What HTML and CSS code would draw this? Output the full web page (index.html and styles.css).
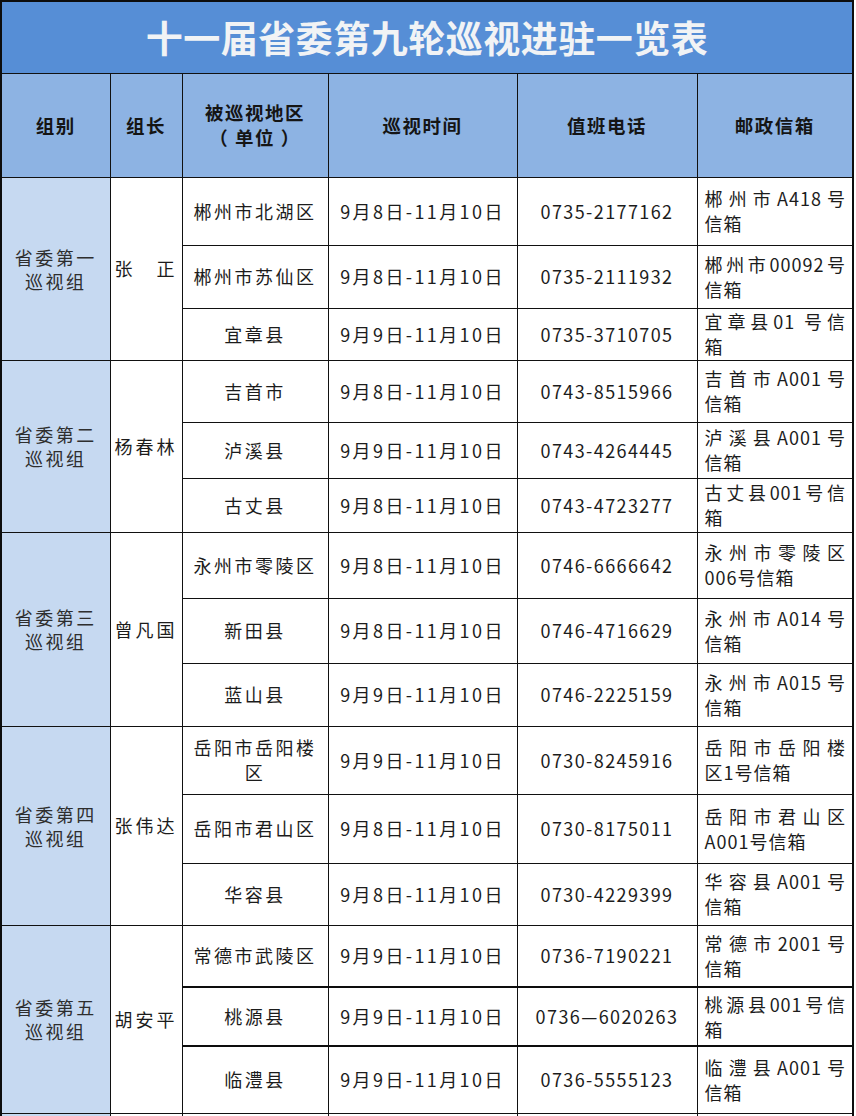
FILE: index.html
```html
<!DOCTYPE html>
<html lang="zh-CN">
<head>
<meta charset="utf-8">
<title>十一届省委第九轮巡视进驻一览表</title>
<link rel="stylesheet" href="styles.css">
</head>
<body>
<table class="sheet">
  <colgroup>
    <col class="c-group"><col class="c-leader"><col class="c-area"><col class="c-date"><col class="c-phone"><col class="c-mail">
  </colgroup>
  <thead>
    <tr class="title-row"><th colspan="6" class="title">十一届省委第九轮巡视进驻一览表</th></tr>
    <tr class="head-row">
      <th>组别</th>
      <th>组长</th>
      <th><span class="hl">被巡视地区</span><span class="hl">（ 单位 ）</span></th>
      <th>巡视时间</th>
      <th>值班电话</th>
      <th>邮政信箱</th>
    </tr>
  </thead>
  <tbody>
    <tr>
      <td rowspan="3" class="group"><span class="gl">省委第一</span><span class="gl">巡视组</span></td>
      <td rowspan="3" class="leader">张　正</td>
      <td class="area">郴州市北湖区</td><td class="date">9月8日-11月10日</td><td class="phone">0735-2177162</td>
      <td class="mail"><span class="m1">郴州市A418号</span><span class="m2">信箱</span></td>
    </tr>
    <tr>
      <td class="area">郴州市苏仙区</td><td class="date">9月8日-11月10日</td><td class="phone">0735-2111932</td>
      <td class="mail"><span class="m1">郴州市00092号</span><span class="m2">信箱</span></td>
    </tr>
    <tr>
      <td class="area">宜章县</td><td class="date">9月9日-11月10日</td><td class="phone">0735-3710705</td>
      <td class="mail"><span class="m1">宜章县01 号信</span><span class="m2">箱</span></td>
    </tr>
    <tr>
      <td rowspan="3" class="group"><span class="gl">省委第二</span><span class="gl">巡视组</span></td>
      <td rowspan="3" class="leader">杨春林</td>
      <td class="area">吉首市</td><td class="date">9月8日-11月10日</td><td class="phone">0743-8515966</td>
      <td class="mail"><span class="m1">吉首市A001号</span><span class="m2">信箱</span></td>
    </tr>
    <tr>
      <td class="area">泸溪县</td><td class="date">9月9日-11月10日</td><td class="phone">0743-4264445</td>
      <td class="mail"><span class="m1">泸溪县A001号</span><span class="m2">信箱</span></td>
    </tr>
    <tr>
      <td class="area">古丈县</td><td class="date">9月8日-11月10日</td><td class="phone">0743-4723277</td>
      <td class="mail"><span class="m1">古丈县001号信</span><span class="m2">箱</span></td>
    </tr>
    <tr>
      <td rowspan="3" class="group"><span class="gl">省委第三</span><span class="gl">巡视组</span></td>
      <td rowspan="3" class="leader">曾凡国</td>
      <td class="area">永州市零陵区</td><td class="date">9月8日-11月10日</td><td class="phone">0746-6666642</td>
      <td class="mail"><span class="m1">永州市零陵区</span><span class="m2">006号信箱</span></td>
    </tr>
    <tr>
      <td class="area">新田县</td><td class="date">9月8日-11月10日</td><td class="phone">0746-4716629</td>
      <td class="mail"><span class="m1">永州市A014号</span><span class="m2">信箱</span></td>
    </tr>
    <tr>
      <td class="area">蓝山县</td><td class="date">9月9日-11月10日</td><td class="phone">0746-2225159</td>
      <td class="mail"><span class="m1">永州市A015号</span><span class="m2">信箱</span></td>
    </tr>
    <tr>
      <td rowspan="3" class="group"><span class="gl">省委第四</span><span class="gl">巡视组</span></td>
      <td rowspan="3" class="leader">张伟达</td>
      <td class="area"><span class="al">岳阳市岳阳楼</span><span class="al">区</span></td><td class="date">9月9日-11月10日</td><td class="phone">0730-8245916</td>
      <td class="mail"><span class="m1">岳阳市岳阳楼</span><span class="m2">区1号信箱</span></td>
    </tr>
    <tr>
      <td class="area">岳阳市君山区</td><td class="date">9月8日-11月10日</td><td class="phone">0730-8175011</td>
      <td class="mail"><span class="m1">岳阳市君山区</span><span class="m2">A001号信箱</span></td>
    </tr>
    <tr>
      <td class="area">华容县</td><td class="date">9月8日-11月10日</td><td class="phone">0730-4229399</td>
      <td class="mail"><span class="m1">华容县A001号</span><span class="m2">信箱</span></td>
    </tr>
    <tr>
      <td rowspan="3" class="group"><span class="gl">省委第五</span><span class="gl">巡视组</span></td>
      <td rowspan="3" class="leader">胡安平</td>
      <td class="area">常德市武陵区</td><td class="date">9月9日-11月10日</td><td class="phone">0736-7190221</td>
      <td class="mail"><span class="m1">常德市2001号</span><span class="m2">信箱</span></td>
    </tr>
    <tr class="thick">
      <td class="area">桃源县</td><td class="date">9月9日-11月10日</td><td class="phone">0736—6020263</td>
      <td class="mail"><span class="m1">桃源县001号信</span><span class="m2">箱</span></td>
    </tr>
    <tr class="thick">
      <td class="area">临澧县</td><td class="date">9月9日-11月10日</td><td class="phone">0736-5555123</td>
      <td class="mail"><span class="m1">临澧县A001号</span><span class="m2">信箱</span></td>
    </tr>
    <tr class="tail">
      <td class="group"></td><td></td><td></td><td></td><td></td><td></td>
    </tr>
  </tbody>
</table>
</body>
</html>
```

FILE: styles.css
```css
html, body {
  margin: 0;
  padding: 0;
  background: #ffffff;
}

body {
  font-family: "Noto Sans CJK SC", "Noto Sans", sans-serif;
  color: #1c1c1c;
  overflow: hidden;
}

.sheet {
  border-collapse: collapse;
  table-layout: fixed;
  width: 852px;
  border: 2px solid #0d0d0d;
}

.c-group { width: 109px; }
.c-leader { width: 72px; }
.c-area { width: 146px; }
.c-date { width: 189px; }
.c-phone { width: 180px; }
.c-mail { width: 156px; }

.sheet th,
.sheet td {
  border: 1px solid #111111;
  padding: 0;
  text-align: center;
  vertical-align: middle;
}

.title-row { height: 72px; }

.title {
  background: #568ed6;
  color: #f1f3f5;
  font-size: 37px;
  font-weight: 700;
  letter-spacing: 0.5px;
  line-height: 1;
  padding-top: 2px;
}

.head-row { height: 104px; }

.head-row th {
  background: #8db3e3;
  color: #151515;
  font-size: 18.5px;
  font-weight: 700;
  letter-spacing: 1.5px;
  line-height: 25px;
}

.hl { display: block; }

.sheet tbody td {
  font-size: 18px;
  line-height: 25px;
  background: #ffffff;
}

.sheet tbody tr:nth-child(1) { height: 68px; }
.sheet tbody tr:nth-child(2) { height: 63px; }
.sheet tbody tr:nth-child(3) { height: 52px; }
.sheet tbody tr:nth-child(4) { height: 62px; }
.sheet tbody tr:nth-child(5) { height: 56px; }
.sheet tbody tr:nth-child(6) { height: 54px; }
.sheet tbody tr:nth-child(7) { height: 66px; }
.sheet tbody tr:nth-child(8) { height: 65px; }
.sheet tbody tr:nth-child(9) { height: 63px; }
.sheet tbody tr:nth-child(10) { height: 68px; }
.sheet tbody tr:nth-child(11) { height: 69px; }
.sheet tbody tr:nth-child(12) { height: 62px; }
.sheet tbody tr:nth-child(13) { height: 62px; }
.sheet tbody tr:nth-child(14) { height: 59px; }
.sheet tbody tr:nth-child(15) { height: 67px; }
.sheet tbody tr.tail { height: 40px; }

.sheet tbody tr.thick td { border-top: 2px solid #0d0d0d; }

.sheet tbody td.group {
  background: #c6d9f1;
  color: #2e2e2e;
  letter-spacing: 2.5px;
  line-height: 24px;
}

.gl { display: block; }

.leader { letter-spacing: 3px; }

.area { letter-spacing: 2.5px; }
.al { display: block; }

.date { letter-spacing: 2.4px; }

.phone { letter-spacing: 1.4px; }

.sheet tbody td.mail {
  text-align: left;
  padding: 0 6px 0 7px;
  letter-spacing: 1px;
}

.m1 {
  display: block;
  text-align: justify;
  text-align-last: justify;
}

.m2 { display: block; }
```
